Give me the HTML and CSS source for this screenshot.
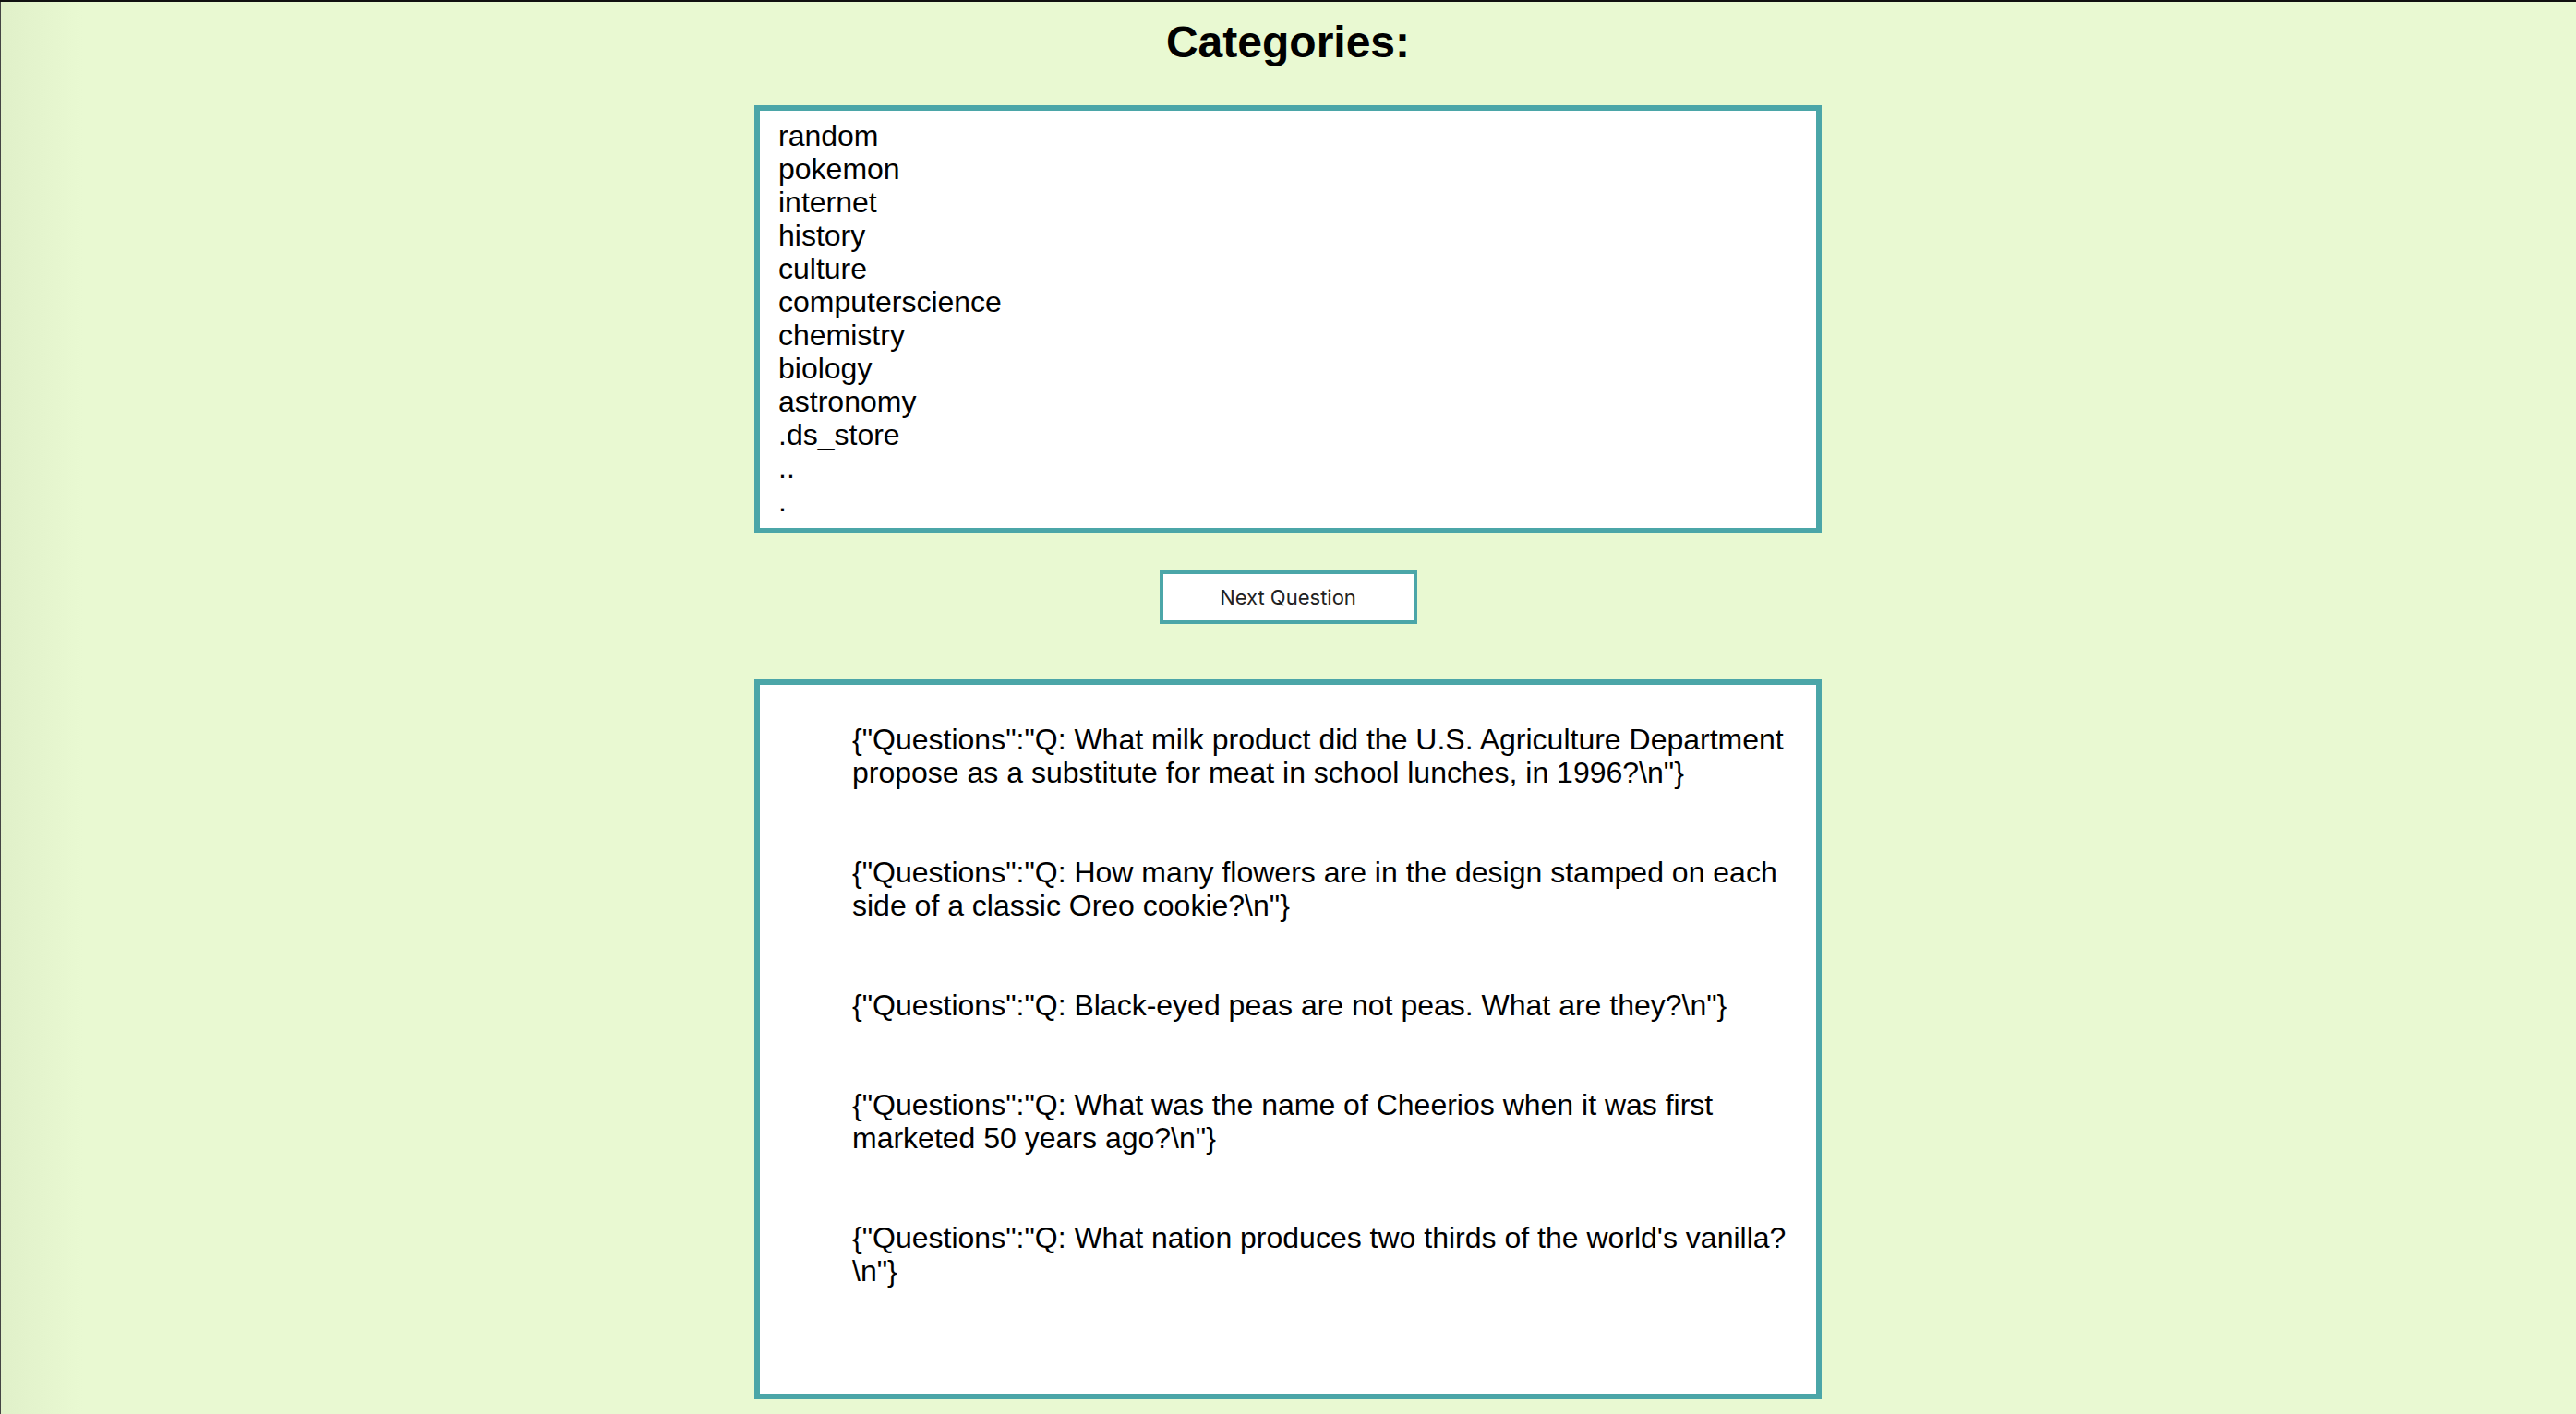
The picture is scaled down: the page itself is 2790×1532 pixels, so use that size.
FILE: index.html
```html
<!DOCTYPE html>
<html lang="en">
<head>
    <meta charset="UTF-8">
    <meta name="viewport" content="width=device-width, initial-scale=1.0">
    <title>Trivia</title>
    <link rel="stylesheet" href="styles.css">
</head>
<body>

<div class="page">

    <h2 class="title">Categories:</h2>

    <ul class="panel categoryList" id="categoryList">
        <li>random</li>
        <li>pokemon</li>
        <li>internet</li>
        <li>history</li>
        <li>culture</li>
        <li>computerscience</li>
        <li>chemistry</li>
        <li>biology</li>
        <li>astronomy</li>
        <li>.ds_store</li>
        <li>..</li>
        <li>.</li>
    </ul>

    <button class="nextButton" id="nextButton">Next Question</button>

    <div class="panel questionPanel" id="questionPanel">
        <ul class="questionList">
            <li>{"Questions":"Q: What milk product did the U.S. Agriculture Department propose as a substitute for meat in school lunches, in 1996?\n"}</li>
            <li>{"Questions":"Q: How many flowers are in the design stamped on each side of a classic Oreo cookie?\n"}</li>
            <li>{"Questions":"Q: Black-eyed peas are not peas. What are they?\n"}</li>
            <li>{"Questions":"Q: What was the name of Cheerios when it was first marketed 50 years ago?\n"}</li>
            <li>{"Questions":"Q: What nation produces two thirds of the world's vanilla?\n"}</li>
        </ul>
    </div>

</div>

</body>
</html>
```

FILE: styles.css
```css
html {
    background-color: #e9f9d2;
}

body {
    margin: 0;
    border-top: 2px solid #111;
    min-height: 1530px;
    background: linear-gradient(to right, #e0f0c9 0px, #e9f9d2 90px);
    box-shadow: inset 1px 0 0 #444;
    font-family: "Liberation Sans", Arial, sans-serif;
    color: #000;
}

.page {
    display: flex;
    flex-direction: column;
    align-items: center;
}

.title {
    margin: 16px 0 40px 0;
    font-size: 48px;
    line-height: 56px;
    font-weight: bold;
}

.panel {
    box-sizing: border-box;
    width: 1156px;
    margin: 0;
    border: 6px solid #4ba6a8;
    background-color: #fff;
    padding: 9px 20px 6px 20px;
    font-size: 32px;
    line-height: 36px;
}

.categoryList {
    height: 464px;
    list-style: none;
}

.nextButton {
    box-sizing: border-box;
    width: 279px;
    height: 58px;
    margin: 40px 0 60px 0;
    border: 4px solid #4ba6a8;
    border-radius: 0;
    background-color: #fff;
    color: #222;
    font-family: Inter, "Liberation Sans", sans-serif;
    font-size: 22px;
    padding: 0;
    cursor: pointer;
}

.questionPanel {
    height: 780px;
}

.questionList {
    list-style: none;
    margin: 32px 0 0 0;
    padding: 0 0 0 80px;
}

.questionList li {
    margin-bottom: 72px;
}
```
